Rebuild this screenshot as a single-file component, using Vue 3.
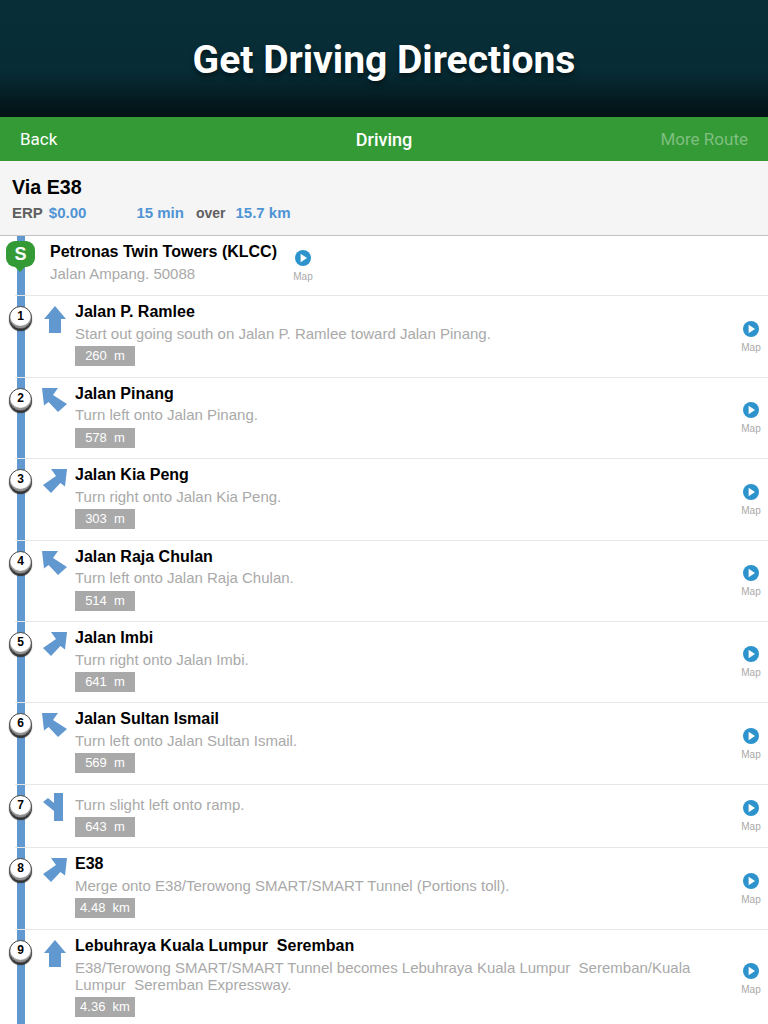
<script setup>
const steps = [
  { n: 1, arrow: 'up', name: 'Jalan P. Ramlee', text: 'Start out going south on Jalan P. Ramlee toward Jalan Pinang.', dist: '260  m' },
  { n: 2, arrow: 'left', name: 'Jalan Pinang', text: 'Turn left onto Jalan Pinang.', dist: '578  m' },
  { n: 3, arrow: 'right', name: 'Jalan Kia Peng', text: 'Turn right onto Jalan Kia Peng.', dist: '303  m' },
  { n: 4, arrow: 'left', name: 'Jalan Raja Chulan', text: 'Turn left onto Jalan Raja Chulan.', dist: '514  m' },
  { n: 5, arrow: 'right', name: 'Jalan Imbi', text: 'Turn right onto Jalan Imbi.', dist: '641  m' },
  { n: 6, arrow: 'left', name: 'Jalan Sultan Ismail', text: 'Turn left onto Jalan Sultan Ismail.', dist: '569  m' },
  { n: 7, arrow: 'ramp', name: '', text: 'Turn slight left onto ramp.', dist: '643  m' },
  { n: 8, arrow: 'right', name: 'E38', text: 'Merge onto E38/Terowong SMART/SMART Tunnel (Portions toll).', dist: '4.48  km' },
  { n: 9, arrow: 'up', name: 'Lebuhraya Kuala Lumpur  Seremban', text: 'E38/Terowong SMART/SMART Tunnel becomes Lebuhraya Kuala Lumpur  Seremban/Kuala Lumpur  Seremban Expressway.', dist: '4.36  km' },
]

const arrows = {
  up: 'M13 1 L24 14 H19 V28 H7 V14 H2 Z',
  left: 'M0 1 H16 L11 8 L25 17 L16 25 L6.6 15 L2 18.5 Z',
  right: 'M25 1 H9 L14 8 L1 17 L9 25 L18.4 15 L23 18.5 Z',
  ramp: 'M12 -1 H21 V27 H12 V17 L1 8 L6 4 L12 9 Z',
}
</script>

<template>
  <div class="page">
    <header class="banner">
      <h1>Get Driving Directions</h1>
    </header>

    <nav class="navbar">
      <span class="nav-side">Back</span>
      <span class="nav-title">Driving</span>
      <span class="nav-side nav-right">More Route</span>
    </nav>

    <section class="summary">
      <h2>Via E38</h2>
      <p class="meta">
        <span class="grey">ERP</span>
        <span class="blue erp">$0.00</span>
        <span class="blue time">15 min</span>
        <span class="grey over">over</span>
        <span class="blue">15.7 km</span>
      </p>
    </section>

    <div class="route">
      <div class="route-line"></div>

      <div class="start">
        <div class="pin">
          <span>S</span>
          <i></i>
        </div>
        <div class="start-text">
          <div class="name">Petronas Twin Towers (KLCC)</div>
          <div class="desc">Jalan Ampang. 50088</div>
        </div>
        <div class="map-link">
          <svg width="16" height="16" viewBox="0 0 16 16"><circle cx="8" cy="8" r="8" fill="#2d93cc" /><path d="M5.6 3.8 L12 8 L5.6 12.2 Z" fill="#fff" /></svg>
          <span>Map</span>
        </div>
      </div>

      <div v-for="step in steps" :key="step.n" :class="['step', { 'no-name': !step.name }]">
        <div class="num">{{ step.n }}</div>
        <svg class="arrow" width="26" height="29" viewBox="0 0 26 29"><path :d="arrows[step.arrow]" fill="#6198d0" /></svg>
        <div class="step-text">
          <div v-if="step.name" class="name">{{ step.name }}</div>
          <div class="desc">{{ step.text }}</div>
          <div class="dist">{{ step.dist }}</div>
        </div>
        <div class="map-link">
          <svg width="16" height="16" viewBox="0 0 16 16"><circle cx="8" cy="8" r="8" fill="#2d93cc" /><path d="M5.6 3.8 L12 8 L5.6 12.2 Z" fill="#fff" /></svg>
          <span>Map</span>
        </div>
      </div>
    </div>
  </div>
</template>

<style scoped>
.page {
  width: 768px;
  height: 1024px;
  overflow: hidden;
  background: #fff;
  font-family: "Liberation Sans", Arial, sans-serif;
}

.banner {
  height: 117px;
  background: linear-gradient(#082f38 0%, #072c35 60%, #04181d 90%, #031215 100%);
  display: flex;
  align-items: center;
  justify-content: center;
}

.banner h1 {
  margin: 3px 0 0;
  font-family: Roboto, sans-serif;
  font-size: 39px;
  font-weight: 700;
  color: #fff;
  text-shadow: 0 3px 5px rgba(0, 0, 0, 0.5);
}

.navbar {
  height: 44px;
  background: #349a35;
  display: flex;
  align-items: center;
  justify-content: space-between;
  padding: 0 20px;
  font-family: Roboto, sans-serif;
  color: #fff;
}

.nav-side {
  width: 120px;
  font-size: 17px;
  font-weight: 400;
}

.nav-right {
  text-align: right;
  color: #7fbf80;
}

.nav-title {
  font-size: 18px;
  font-weight: 500;
}

.summary {
  height: 75px;
  box-sizing: border-box;
  padding: 15px 12px 0;
  background: #f5f5f5;
  border-bottom: 1px solid #c4c4c4;
}

.summary h2 {
  margin: 0;
  font-size: 19.7px;
  line-height: 22px;
  font-weight: 700;
  color: #000;
}

.meta {
  margin: 6px 0 0;
  font-size: 15px;
  line-height: 18px;
  font-weight: 700;
  white-space: pre;
  display: flex;
}

.grey { color: #5f5f5f; }
.blue { color: #4f94d4; }
.erp { margin-left: 6px; }
.time { margin-left: 50px; }
.over { margin: 0 10px 0 12px; font-size: 14px; }

.route {
  position: relative;
}

.route-line {
  position: absolute;
  left: 17px;
  top: 0;
  bottom: 0;
  width: 8px;
  background: #6198d0;
}

.start {
  position: relative;
  height: 59px;
  box-sizing: border-box;
  display: flex;
  padding-left: 6px;
}

.pin {
  position: relative;
  width: 29px;
  height: 26px;
  margin-top: 5px;
  border-radius: 9px;
  background: #349a35;
  color: #fff;
  font-weight: 700;
  font-size: 18px;
  line-height: 26px;
  text-align: center;
}

.pin i {
  position: absolute;
  left: 9px;
  bottom: -5px;
  border-left: 5px solid transparent;
  border-right: 5px solid transparent;
  border-top: 5px solid #349a35;
}

.start-text {
  margin-left: 15px;
  padding-top: 6px;
}

.name {
  font-size: 16px;
  line-height: 20px;
  font-weight: 700;
  color: #000;
  white-space: pre-wrap;
}

.desc {
  font-size: 15px;
  line-height: 17px;
  color: #a9a9a9;
  margin-top: 2.7px;
  white-space: pre-wrap;
}

.step {
  position: relative;
  min-height: 81px;
  box-sizing: border-box;
  display: flex;
  margin-left: 15px;
  padding: 6px 5px 10px 0;
  border-top: 1px solid #e6e6e6;
  margin-top: 0.4px;
}

.step.no-name {
  min-height: 63px;
}

.num {
  flex: none;
  width: 23px;
  height: 23px;
  margin: 4px 0 0 -6px;
  box-sizing: border-box;
  border: 1px solid #444;
  border-radius: 50%;
  background: #fff;
  box-shadow: inset 0 -2px 1px #8a8a8a, 0 2px 1px #333;
  font-size: 12px;
  font-weight: 700;
  line-height: 19px;
  text-align: center;
  color: #000;
}

.arrow {
  flex: none;
  margin: 3px 0 0 10px;
  overflow: visible;
}

.step-text {
  flex: 1;
  margin-left: 7px;
  min-width: 0;
  padding-right: 30px;
}

.step.no-name .desc {
  margin-top: 5px;
}

.dist {
  width: 60px;
  height: 20px;
  margin-top: 4.3px;
  background: #a9a9a9;
  color: #fff;
  font-size: 13px;
  line-height: 20px;
  text-align: center;
  white-space: pre;
}

.map-link {
  flex: none;
  width: 24px;
  display: flex;
  flex-direction: column;
  align-items: center;
  align-self: center;
  margin-top: 6px;
  font-size: 10px;
  line-height: 12px;
  color: #a9a9a9;
}

.start .map-link {
  align-self: flex-start;
  margin: 14px 0 0 14px;
}

.map-link span {
  margin-top: 5px;
}
</style>
